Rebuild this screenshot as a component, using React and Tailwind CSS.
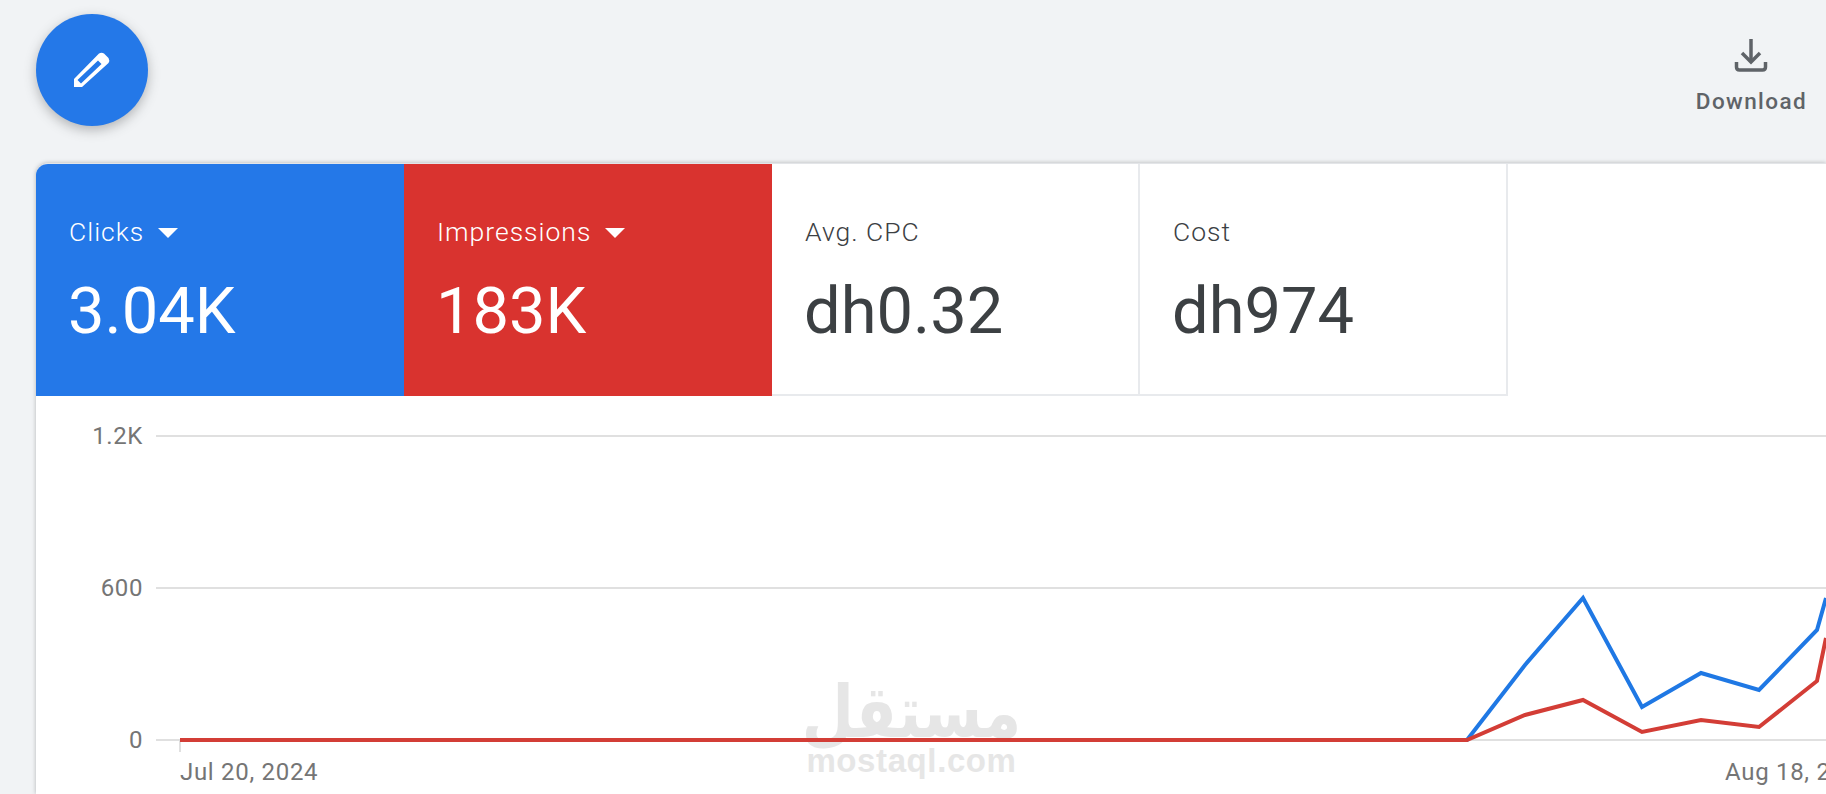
import React from 'react';

const tiles = [
  { label: 'Clicks', value: '3.04K', bg: 'bg-[#2478e8] text-white', arrow: true },
  { label: 'Impressions', value: '183K', bg: 'bg-[#d9332f] text-white', arrow: true },
  { label: 'Avg. CPC', value: 'dh0.32', bg: 'bg-white text-[#3c4043] border-r-2 border-b-2 border-[#e8eaed]' },
  { label: 'Cost', value: 'dh974', bg: 'bg-white text-[#3c4043] border-r-2 border-b-2 border-[#e8eaed]' },
];

const yTicks = [
  { label: '1.2K', y: 40 },
  { label: '600', y: 192 },
  { label: '0', y: 344 },
];

// chart points, relative to the svg (card starts at x=36, y=396)
const bluePts = '144,344 1431,344 1489,269 1547,202 1606,311 1665,277 1723,294 1781,234 1790,202';
const redPts = '144,344 1431,344 1489,319 1547,304 1606,336 1665,324 1723,331 1781,285 1790,242';

const Tile = ({ tile }) => (
  <div className={`w-[368px] h-[232px] pl-[33px] pt-[52px] ${tile.bg}`}>
    <div className="flex items-center gap-[14px] h-[32px] text-[26.5px] tracking-[1px] leading-[32px] font-[350]">
      <span>{tile.label}</span>
      {tile.arrow && <span className="w-0 h-0 mt-[2px] border-x-[10px] border-x-transparent border-t-[10px] border-t-white" />}
    </div>
    <div className="mt-[26px] -ml-[1px] text-[65px] leading-[74px] font-[380]">{tile.value}</div>
  </div>
);

export default function App() {
  return (
    <div className="h-screen overflow-hidden bg-[#f1f3f5] font-['Roboto',sans-serif]">
      <div className="h-[163px] pl-[36px] pt-[14px] pr-[19px] flex justify-between items-start">
        <button className="w-[112px] h-[112px] rounded-full bg-[#2478e8] shadow-[0_4px_12px_rgba(60,64,67,0.35)] flex items-center justify-center">
          <svg width="54" height="54" viewBox="0 0 54 54" fill="white" fillRule="evenodd">
            <path d="M9 36 L34 10.5 Q36.5 9 39 10.5 L43.5 15 Q45 17.5 43.5 20 L17 44 H9 Z M12.5 37 L16 40.5 L36.5 21 L33 17.5 Z" />
          </svg>
        </button>
        <div className="flex flex-col items-center text-[#5f6368] pt-[25px]">
          <svg width="34" height="34" viewBox="0 0 34 34" fill="none" stroke="#5f6368" strokeWidth="3.5">
            <path d="M17 0 V22" />
            <path d="M8 14 L17 23 L26 14" />
            <path d="M2.5 23 V28 Q2.5 31 5.5 31 H28.5 Q31.5 31 31.5 28 V23" />
          </svg>
          <span className="mt-[15px] text-[22.5px] leading-[26px] font-medium tracking-[1.4px]">Download</span>
        </div>
      </div>

      <div className="relative ml-[36px] h-[631px] bg-white rounded-tl-[12px] overflow-hidden border-t border-[#e3e5e8] shadow-[0_0_4px_rgba(60,64,67,0.35)]">
        <div className="flex">
          {tiles.map((t) => (
            <Tile key={t.label} tile={t} />
          ))}
        </div>

        {/* mostaql watermark, the chart line runs over it */}
        <div className="absolute left-[772px] top-[518px] w-[207px] flex flex-col items-center text-[#e6e6e6] pointer-events-none">
          <div dir="rtl" className="font-['DejaVu_Sans',sans-serif] font-bold text-[60px] leading-[60px] h-[60px] scale-y-[1.2]">مستقل</div>
          <div className="mt-[2px] font-['Liberation_Sans',sans-serif] font-bold text-[33px] leading-[34px] tracking-[0.6px]">mostaql.com</div>
        </div>

        <svg width="1790" height="398" viewBox="0 0 1790 398" className="relative block font-['Roboto',sans-serif]">
          {yTicks.map((t) => (
            <g key={t.label}>
              <line x1="120" x2="1790" y1={t.y} y2={t.y} stroke="#e0e0e0" strokeWidth="2" />
              <text x="107" y={t.y + 8} textAnchor="end" fontSize="24" letterSpacing="0.6" fill="#757575">{t.label}</text>
            </g>
          ))}
          <line x1="144" x2="144" y1="344" y2="356" stroke="#e0e0e0" strokeWidth="2" />
          <polyline points={bluePts} fill="none" stroke="#1f78e4" strokeWidth="4" />
          <polyline points={redPts} fill="none" stroke="#d33d36" strokeWidth="4" />
          <text x="144" y="384" fontSize="24" letterSpacing="0.7" fill="#757575">Jul 20, 2024</text>
          <text x="1689" y="384" fontSize="24" letterSpacing="0.7" fill="#757575">Aug 18, 2024</text>
        </svg>
      </div>
    </div>
  );
}
